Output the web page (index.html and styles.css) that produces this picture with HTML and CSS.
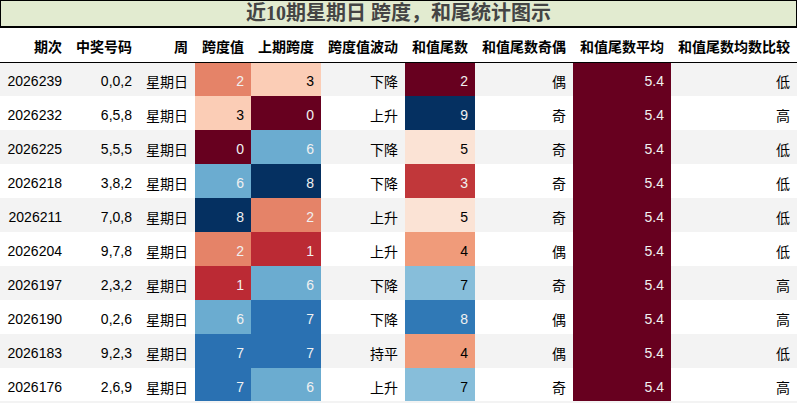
FILE: index.html
```html
<!DOCTYPE html>
<html lang="zh">
<head>
<meta charset="utf-8">
<title>近10期星期日 跨度，和尾统计图示</title>
<link rel="stylesheet" href="styles.css">
</head>
<body>
<div class="wrap">
  <div class="title">近10期星期日 跨度，和尾统计图示</div>
  <table class="stats">
    <colgroup>
      <col class="w69"><col class="w70"><col class="w56"><col class="w56"><col class="w70">
      <col class="w84"><col class="w70"><col class="w98"><col class="w98"><col class="w126">
    </colgroup>
    <thead>
      <tr>
        <th>期次</th><th>中奖号码</th><th>周</th><th>跨度值</th><th>上期跨度</th>
        <th>跨度值波动</th><th>和值尾数</th><th>和值尾数奇偶</th><th>和值尾数平均</th><th>和值尾数均数比较</th>
      </tr>
    </thead>
    <tbody>
      <tr><td>2026239</td><td>0,0,2</td><td>星期日</td><td class="k2">2</td><td class="k3">3</td><td>下降</td><td class="h2">2</td><td>偶</td><td class="avg">5.4</td><td>低</td></tr>
      <tr><td>2026232</td><td>6,5,8</td><td>星期日</td><td class="k3">3</td><td class="k0">0</td><td>上升</td><td class="h9">9</td><td>奇</td><td class="avg">5.4</td><td>高</td></tr>
      <tr><td>2026225</td><td>5,5,5</td><td>星期日</td><td class="k0">0</td><td class="k6">6</td><td>下降</td><td class="h5">5</td><td>奇</td><td class="avg">5.4</td><td>低</td></tr>
      <tr><td>2026218</td><td>3,8,2</td><td>星期日</td><td class="k6">6</td><td class="k8">8</td><td>下降</td><td class="h3">3</td><td>奇</td><td class="avg">5.4</td><td>低</td></tr>
      <tr><td>2026211</td><td>7,0,8</td><td>星期日</td><td class="k8">8</td><td class="k2">2</td><td>上升</td><td class="h5">5</td><td>奇</td><td class="avg">5.4</td><td>低</td></tr>
      <tr><td>2026204</td><td>9,7,8</td><td>星期日</td><td class="k2">2</td><td class="k1">1</td><td>上升</td><td class="h4">4</td><td>偶</td><td class="avg">5.4</td><td>低</td></tr>
      <tr><td>2026197</td><td>2,3,2</td><td>星期日</td><td class="k1">1</td><td class="k6">6</td><td>下降</td><td class="h7">7</td><td>奇</td><td class="avg">5.4</td><td>高</td></tr>
      <tr><td>2026190</td><td>0,2,6</td><td>星期日</td><td class="k6">6</td><td class="k7">7</td><td>下降</td><td class="h8">8</td><td>偶</td><td class="avg">5.4</td><td>高</td></tr>
      <tr><td>2026183</td><td>9,2,3</td><td>星期日</td><td class="k7">7</td><td class="k7">7</td><td>持平</td><td class="h4">4</td><td>偶</td><td class="avg">5.4</td><td>低</td></tr>
      <tr><td>2026176</td><td>2,6,9</td><td>星期日</td><td class="k7">7</td><td class="k6">6</td><td>上升</td><td class="h7">7</td><td>奇</td><td class="avg">5.4</td><td>高</td></tr>
    </tbody>
  </table>
</div>
</body>
</html>
```
FILE: styles.css
```css
html, body {
  margin: 0;
  padding: 0;
  background: #ffffff;
}
.wrap {
  width: 797px;
  font-family: "Liberation Sans", "Noto Sans CJK SC", sans-serif;
  font-size: 14px;
  color: #000;
}
.title {
  box-sizing: border-box;
  height: 28px;
  border: 1px solid #000;
  border-bottom-width: 2px;
  background: #e2ebd0;
  color: #444444;
  font-family: "Liberation Serif", "Noto Sans CJK SC", serif;
  font-weight: bold;
  font-size: 20px;
  line-height: 25px;
  text-align: center;
}
.stats {
  width: 797px;
  border-collapse: collapse;
  table-layout: fixed;
}
.w69 { width: 69px; }
.w70 { width: 70px; }
.w56 { width: 56px; }
.w84 { width: 84px; }
.w98 { width: 98px; }
.w126 { width: 126px; }
.stats th, .stats td {
  padding: 0 7px;
  text-align: right;
  white-space: nowrap;
  overflow: hidden;
}
.stats th {
  height: 34px;
  font-weight: bold;
  border-bottom: 1px solid #000;
  padding-top: 3px;
  box-sizing: border-box;
}
.stats td {
  height: 34px;
  padding-top: 4px;
  box-sizing: border-box;
}
.stats tbody tr:nth-child(odd) { background: #f3f3f3; }
.stats tbody tr:nth-child(even) { background: #ffffff; }
.stats tbody tr:last-child td { border-bottom: 2px solid #f3f3f3; }

.k0 { background: #67001f; color: #f1f1f1; }
.k1 { background: #bb2a34; color: #f1f1f1; }
.k2 { background: #e58368; color: #f1f1f1; }
.k3 { background: #fbcdb6; color: #000; }
.k6 { background: #6bacd0; color: #f1f1f1; }
.k7 { background: #2a71b2; color: #f1f1f1; }
.k8 { background: #053061; color: #f1f1f1; }

.h2 { background: #67001f; color: #f1f1f1; }
.h3 { background: #c1373a; color: #f1f1f1; }
.h4 { background: #f09b7a; color: #000; }
.h5 { background: #fbe3d5; color: #000; }
.h7 { background: #87beda; color: #000; }
.h8 { background: #3079b6; color: #f1f1f1; }
.h9 { background: #053061; color: #f1f1f1; }

.avg { background: #67001f; color: #f1f1f1; }
```
